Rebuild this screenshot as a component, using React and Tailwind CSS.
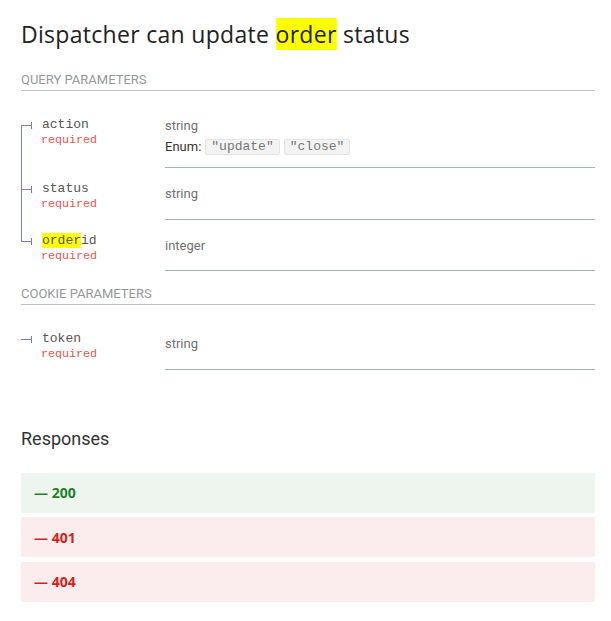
import React from "react";

const LINE = "bg-[#7c7cbb]";

const query = [
  { name: "action", type: "string", enums: ["update", "close"] },
  { name: "status", type: "string" },
  { name: "orderid", type: "integer", mark: "order" },
];

const cookie = [{ name: "token", type: "string" }];

const responses = [
  { code: "200", ok: true },
  { code: "401", ok: false },
  { code: "404", ok: false },
];

const SectionHeader = ({ children, className = "" }) => (
  <h5
    className={`text-[13px] leading-[20px] uppercase text-[#939899] border-b border-[#bec1c3] mb-[13px] ${className}`}
    style={{ fontFamily: "Roboto, sans-serif" }}
  >
    {children}
  </h5>
);

const ParamRow = ({ p, index, count }) => {
  const first = index === 0;
  const last = index === count - 1;
  const single = count === 1;

  return (
    <div className="flex items-stretch">
      <div className="relative w-[144px] shrink-0 pt-[11px] pb-[9px] pl-[21px] font-['Liberation_Mono',monospace]">
        {!single && first && <span className={`absolute left-0 top-[21px] bottom-0 w-px ${LINE}`} />}
        {!single && !first && !last && <span className={`absolute left-0 top-0 bottom-0 w-px ${LINE}`} />}
        {!single && last && <span className={`absolute left-0 top-0 h-[22px] w-px ${LINE}`} />}
        <span className={`absolute left-0 top-[21px] w-[10px] h-px ${LINE}`} />
        <span className={`absolute left-[10px] top-[18px] h-[7px] w-px ${LINE}`} />
        <div className="text-[13px] leading-[20px] text-[#555]">
          {p.mark ? (
            <>
              <mark className="bg-[#ffff00] text-[#555]">{p.mark}</mark>
              {p.name.slice(p.mark.length)}
            </>
          ) : (
            p.name
          )}
        </div>
        <div className="text-[11.7px] leading-[11.5px] text-[#ea5350] -ml-px">required</div>
      </div>
      <div
        className="flex-1 border-b border-[#9fb4be] pt-[12px] pb-[10px] flex flex-col justify-center text-[13px]"
        style={{ fontFamily: "Roboto, sans-serif" }}
      >
        <div className="leading-[20px] text-[#707070]">{p.type}</div>
        {p.enums && (
          <div className="leading-[20px] mt-[1px] text-[#333] flex items-center">
            <span className="mr-[4px]">Enum:</span>
            {p.enums.map((e) => (
              <span
                key={e}
                className="inline-block mr-[4px] px-[5px] leading-[14px] border border-[#e3e4e5] bg-[#f3f3f4] text-[#777] rounded-[2px] font-['Liberation_Mono',monospace]"
              >
                "{e}"
              </span>
            ))}
          </div>
        )}
      </div>
    </div>
  );
};

export default function App() {
  return (
    <div className="min-h-screen bg-white pt-[17px] pl-[21px] pr-[16px] pb-[20px]">
      <h2
        className="text-[23px] leading-[35px] tracking-[0.3px] text-[#222] font-normal"
        style={{ fontFamily: "'Open Sans', sans-serif" }}
      >
        Dispatcher can update <mark className="bg-[#ffff00] text-[#222]">order</mark> status
      </h2>

      <SectionHeader className="mt-[18px]">Query Parameters</SectionHeader>
      <div>
        {query.map((p, i) => (
          <ParamRow key={p.name} p={p} index={i} count={query.length} />
        ))}
      </div>

      <SectionHeader className="mt-[13px]">Cookie Parameters</SectionHeader>
      <div>
        {cookie.map((p, i) => (
          <ParamRow key={p.name} p={p} index={i} count={cookie.length} />
        ))}
      </div>

      <h3
        className="mt-[55px] mb-[21px] text-[18px] leading-[27px] text-[#333] font-normal"
        style={{ fontFamily: "Roboto, sans-serif" }}
      >
        Responses
      </h3>
      <div className="flex flex-col gap-[4.5px]">
        {responses.map((r) => (
          <div
            key={r.code}
            className={`h-[40px] flex items-center pl-[13px] rounded-[2px] text-[14px] font-bold ${
              r.ok ? "bg-[#edf5ee] text-[#1d8127]" : "bg-[#fbeded] text-[#d41f1c]"
            }`}
            style={{ fontFamily: "'Open Sans', sans-serif" }}
          >
            — {r.code}
          </div>
        ))}
      </div>
    </div>
  );
}
